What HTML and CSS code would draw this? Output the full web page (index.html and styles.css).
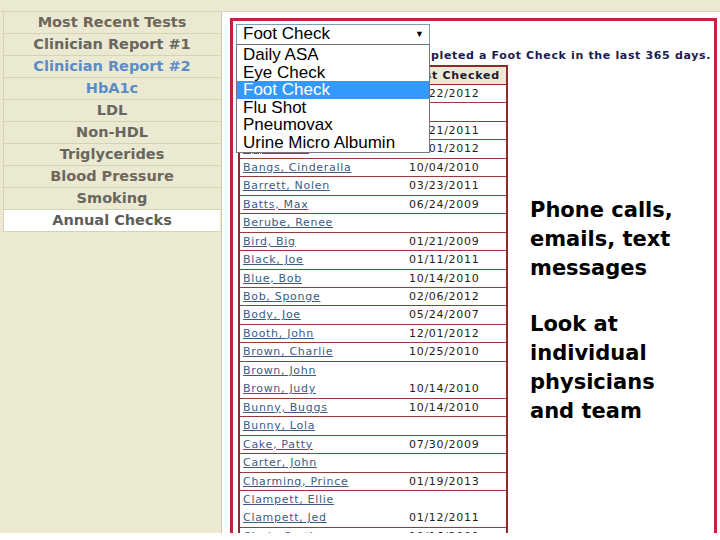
FILE: index.html
```html
<!DOCTYPE html>
<html>
<head>
<meta charset="utf-8">
<link rel="stylesheet" href="styles.css">
</head>
<body>
<div class="page">
  <div class="topbar"></div>
  <div class="body">
    <nav class="sidebar">
      <ul class="menu">
        <li class="brown">Most Recent Tests</li>
        <li>Clinician Report #1</li>
        <li class="blue">Clinician Report #2</li>
        <li class="blue">HbA1c</li>
        <li>LDL</li>
        <li>Non-HDL</li>
        <li>Triglycerides</li>
        <li class="brown">Blood Pressure</li>
        <li>Smoking</li>
        <li class="active">Annual Checks</li>
      </ul>
    </nav>
    <main class="main">
      <div class="panel">
        <div class="select">
          <span class="sel-text">Foot Check</span>
          <span class="sel-arrow">&#9660;</span>
          <ul class="dropdown">
            <li>Daily ASA</li>
            <li>Eye Check</li>
            <li class="hl">Foot Check</li>
            <li>Flu Shot</li>
            <li>Pneumovax</li>
            <li>Urine Micro Albumin</li>
          </ul>
        </div>
        <div class="heading"><span>Patients who have not completed a Foot Check in the last 365 days.</span></div>
        <div class="content">
          <table class="grid">
            <thead>
              <tr><th class="c1">Name</th><th class="c2">Last Checked</th></tr>
            </thead>
            <tbody>
              <tr><td class="c1"><a href="#">Able, Cain</a></td><td class="c2">01/22/2012</td></tr>
              <tr><td class="c1"><a href="#">Adams, Ansel</a></td><td class="c2"></td></tr>
              <tr><td class="c1"><a href="#">Anderson, Jim</a></td><td class="c2">03/21/2011</td></tr>
              <tr><td class="c1"><a href="#">Apple, Sue</a></td><td class="c2">05/01/2012</td></tr>
              <tr><td class="c1"><a href="#">Bangs, Cinderalla</a></td><td class="c2">10/04/2010</td></tr>
              <tr><td class="c1"><a href="#">Barrett, Nolen</a></td><td class="c2">03/23/2011</td></tr>
              <tr><td class="c1"><a href="#">Batts, Max</a></td><td class="c2">06/24/2009</td></tr>
              <tr><td class="c1"><a href="#">Berube, Renee</a></td><td class="c2"></td></tr>
              <tr><td class="c1"><a href="#">Bird, Big</a></td><td class="c2">01/21/2009</td></tr>
              <tr><td class="c1"><a href="#">Black, Joe</a></td><td class="c2">01/11/2011</td></tr>
              <tr><td class="c1"><a href="#">Blue, Bob</a></td><td class="c2">10/14/2010</td></tr>
              <tr><td class="c1"><a href="#">Bob, Sponge</a></td><td class="c2">02/06/2012</td></tr>
              <tr><td class="c1"><a href="#">Body, Joe</a></td><td class="c2">05/24/2007</td></tr>
              <tr><td class="c1"><a href="#">Booth, John</a></td><td class="c2">12/01/2012</td></tr>
              <tr><td class="c1"><a href="#">Brown, Charlie</a></td><td class="c2">10/25/2010</td></tr>
              <tr class="nb"><td class="c1"><a href="#">Brown, John</a></td><td class="c2"></td></tr>
              <tr><td class="c1"><a href="#">Brown, Judy</a></td><td class="c2">10/14/2010</td></tr>
              <tr><td class="c1"><a href="#">Bunny, Buggs</a></td><td class="c2">10/14/2010</td></tr>
              <tr><td class="c1"><a href="#">Bunny, Lola</a></td><td class="c2"></td></tr>
              <tr><td class="c1"><a href="#">Cake, Patty</a></td><td class="c2">07/30/2009</td></tr>
              <tr><td class="c1"><a href="#">Carter, John</a></td><td class="c2"></td></tr>
              <tr><td class="c1"><a href="#">Charming, Prince</a></td><td class="c2">01/19/2013</td></tr>
              <tr class="nb"><td class="c1"><a href="#">Clampett, Ellie</a></td><td class="c2"></td></tr>
              <tr><td class="c1"><a href="#">Clampett, Jed</a></td><td class="c2">01/12/2011</td></tr>
              <tr><td class="c1"><a href="#">Clark, Curtis</a></td><td class="c2">10/16/2009</td></tr>
            </tbody>
          </table>
          <div class="notes">
            <p>Phone calls,<br>emails, text<br>messages</p>
            <p class="second">Look at<br>individual<br>physicians<br>and team</p>
          </div>
        </div>
      </div>
    </main>
  </div>
</div>
</body>
</html>
```
FILE: styles.css
```css
html, body {
  margin: 0;
  padding: 0;
  background: #ffffff;
}
body {
  font-family: "DejaVu Sans", Verdana, sans-serif;
}
.page {
  height: 533px;
  overflow: hidden;
  display: flex;
  flex-direction: column;
}
.topbar {
  height: 11px;
  background: #ece9d2;
  border-bottom: 1px solid #d8d4b6;
  flex: none;
}
.body {
  flex: 1;
  display: flex;
  min-height: 0;
}
.sidebar {
  width: 218px;
  padding-left: 3px;
  background: #ece9d2;
  border-right: 1px solid #cdc9ad;
  flex: none;
}
.menu {
  list-style: none;
  margin: 0;
  padding: 0;
  border-left: 1px solid #d6d2b5;
  width: 216px;
}
.menu li {
  height: 21px;
  line-height: 21px;
  border-bottom: 1px solid #d6d2b5;
  text-align: center;
  font-weight: bold;
  font-size: 14.5px;
  color: #67665f;
  white-space: nowrap;
}
.menu li.brown {
  color: #6e675a;
}
.menu li.blue {
  color: #5a8dc8;
}
.menu li.active {
  background: #ffffff;
  color: #5e5d57;
}
.main {
  flex: 1;
  min-width: 0;
  padding: 6px 3px 0 8px;
  display: flex;
}
.panel {
  flex: 1;
  min-width: 0;
  border: 3px solid #c5203f;
  border-bottom: none;
  padding: 3px 3px 0 3px;
  overflow: hidden;
}
.select {
  position: relative;
  width: 192px;
  height: 19px;
  border: 1px solid #7f9db9;
  background: #fff;
  display: flex;
  align-items: center;
  justify-content: space-between;
  padding: 0 5px 0 6px;
  box-sizing: content-box;
  width: 181px;
  font-family: "Liberation Sans", Arial, sans-serif;
  font-size: 17px;
  color: #000;
}
.sel-text {
  line-height: 19px;
  margin-top: -3px;
}
.sel-arrow {
  font-size: 9px;
  line-height: 19px;
}
.dropdown {
  position: absolute;
  top: 100%;
  left: -1px;
  width: 192px;
  margin: 0;
  padding: 1px 0;
  list-style: none;
  background: #fff;
  border: 1px solid #767676;
  z-index: 5;
}
.dropdown li {
  line-height: 17.5px;
  height: 17.5px;
  padding-left: 6px;
  color: #000;
  white-space: nowrap;
}
.dropdown li.hl {
  background: #3399ff;
  color: #fff;
}
.heading {
  margin-top: 4px;
  height: 14px;
  line-height: 14px;
  display: flex;
  justify-content: flex-end;
  font-size: 11px;
  font-weight: bold;
  letter-spacing: 0.65px;
  color: #1b1b4d;
  white-space: nowrap;
}
.content {
  display: flex;
  align-items: flex-start;
  margin-top: 2px;
  padding-left: 2px;
}
.grid {
  width: 270px;
  border: 2px solid #8c2b2b;
  border-spacing: 0;
  flex: none;
  font-size: 11px;
  letter-spacing: 0.7px;
}
.grid th {
  background: #efe8d5;
  height: 17px;
  line-height: 17px;
  padding: 0;
  border-bottom: 1px solid #8c2b2b;
  text-align: left;
  font-weight: bold;
  color: #1c1c30;
}
.grid td {
  height: 17.45px;
  line-height: 17.45px;
  padding: 0;
  border-bottom: 1px solid #9b3a3a;
  white-space: nowrap;
  color: #1e1e1e;
}
.grid tr.nb td {
  border-bottom-color: transparent;
}
.grid .c1 {
  width: 162px;
  padding-left: 3px;
}
.grid .c2 {
  padding-left: 4px;
}
.grid a {
  color: #3d5b84;
  text-decoration: underline;
}
.notes {
  margin-left: 22px;
  padding-top: 131px;
  font-family: "DejaVu Sans", sans-serif;
  font-weight: bold;
  font-size: 21px;
  line-height: 29px;
  color: #000;
}
.notes p {
  margin: 0;
  white-space: nowrap;
}
.notes p.second {
  margin-top: 27px;
}
```
